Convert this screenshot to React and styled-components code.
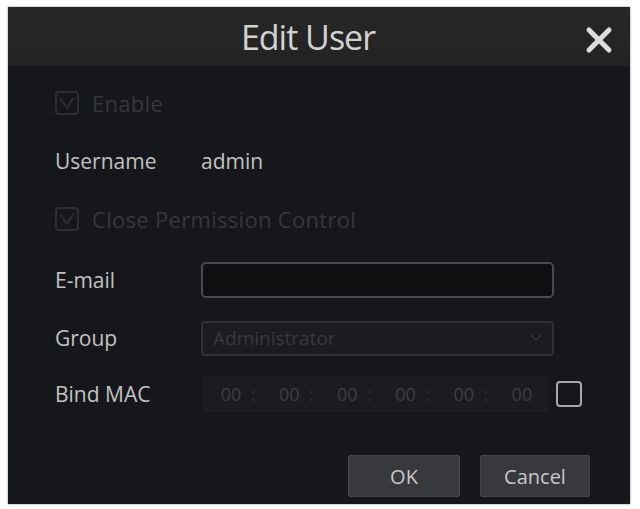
import styled, { createGlobalStyle } from "styled-components";

const GlobalStyle = createGlobalStyle`
  html, body {
    margin: 0;
    padding: 0;
    background: #ffffff;
  }
  body {
    font-family: "Open Sans", "Noto Sans", sans-serif;
  }
`;

const Page = styled.div`
  padding: 7px 10px 5px 8px;
`;

const Dialog = styled.div`
  width: 622px;
  height: 497px;
  display: flex;
  flex-direction: column;
  background: #16171a;
  box-shadow: 0 0 2px rgba(0, 0, 0, 0.5);
`;

const Header = styled.div`
  position: relative;
  height: 59px;
  flex-shrink: 0;
  display: flex;
  align-items: center;
  justify-content: center;
  background: linear-gradient(#272727, #232323);
`;

const Title = styled.h1`
  margin: 0 22px 0 0;
  font-weight: 400;
  font-size: 34px;
  letter-spacing: -1px;
  color: #d2d2d2;
`;

const CloseButton = styled.button`
  position: absolute;
  right: 17px;
  top: 19px;
  width: 28px;
  height: 28px;
  padding: 0;
  border: none;
  background: transparent;
  cursor: pointer;
`;

const Body = styled.div`
  flex: 1;
  display: flex;
  flex-direction: column;
  padding: 17px 40px 7px 47px;
  gap: 18px;
`;

const Row = styled.div`
  height: 40px;
  display: flex;
  align-items: center;
  margin-top: ${(p) => p.$mt || 0}px;
`;

const Label = styled.span`
  width: 146px;
  flex-shrink: 0;
  font-size: 21px;
  color: #c2c2c2;
`;

const Value = styled.span`
  font-size: 21px;
  color: #c2c2c2;
`;

const CheckLabel = styled.label`
  display: flex;
  align-items: center;
  gap: 13px;
  font-size: 22px;
  letter-spacing: 0.3px;
  color: #36373b;
`;

const Box = styled.span`
  width: ${(p) => (p.$dim ? 24 : 26)}px;
  height: ${(p) => (p.$dim ? 24 : 26)}px;
  flex-shrink: 0;
  box-sizing: border-box;
  border: 2px solid ${(p) => (p.$dim ? "#2d2e32" : "#a8a8a8")};
  border-radius: 4px;
  display: flex;
  align-items: center;
  justify-content: center;
`;

const TextInput = styled.div`
  width: 353px;
  height: 36px;
  box-sizing: border-box;
  border: 2px solid #4a4b4f;
  border-radius: 5px;
  background: #0e0f11;
`;

const Select = styled.div`
  width: 353px;
  height: 35px;
  box-sizing: border-box;
  border: 2px solid #2e3034;
  border-radius: 4px;
  background: #1b1c1f;
  display: flex;
  align-items: center;
  justify-content: space-between;
  padding: 0 10px;
  font-size: 19px;
  color: #38393d;
`;

const MacWrap = styled.div`
  display: flex;
  align-items: center;
  gap: 6px;
  margin-left: 2px;
`;

const MacField = styled.div`
  width: 347px;
  height: 36px;
  box-sizing: border-box;
  background: #1b1c1f;
  display: flex;
  align-items: center;
  justify-content: space-around;
  padding: 0 6px;
  font-size: 18px;
  color: #3e3f43;
`;

const Colon = styled.span`
  color: #2e2f33;
`;

const Footer = styled.div`
  margin-top: auto;
  display: flex;
  justify-content: flex-end;
  gap: 20px;
`;

const Button = styled.button`
  width: ${(p) => p.$w}px;
  height: 42px;
  border: 1px solid #45464a;
  border-radius: 2px;
  background: #38393c;
  color: #c8c8c8;
  font-family: "Open Sans", "Noto Sans", sans-serif;
  font-size: 20px;
  cursor: pointer;
`;

function Check({ dim }) {
  return (
    <Box $dim={dim}>
      {dim && (
        <svg width="16" height="14" viewBox="0 0 16 14">
          <path d="M1.5 3 L8 12 L14.5 1.5" fill="none" stroke="#2d2e32" strokeWidth="2" />
        </svg>
      )}
    </Box>
  );
}

export default function App() {
  const mac = ["00", "00", "00", "00", "00", "00"];
  return (
    <>
      <GlobalStyle />
      <Page>
        <Dialog>
          <Header>
            <Title>Edit User</Title>
            <CloseButton aria-label="close">
              <svg width="28" height="28" viewBox="0 0 28 28">
                <path d="M4 4 L24 24 M24 4 L4 24" stroke="#dcdcdc" strokeWidth="5" strokeLinecap="round" />
              </svg>
            </CloseButton>
          </Header>
          <Body>
            <Row>
              <CheckLabel>
                <Check dim />
                Enable
              </CheckLabel>
            </Row>
            <Row>
              <Label>Username</Label>
              <Value>admin</Value>
            </Row>
            <Row>
              <CheckLabel>
                <Check dim />
                Close Permission Control
              </CheckLabel>
            </Row>
            <Row $mt={3}>
              <Label>E-mail</Label>
              <TextInput />
            </Row>
            <Row>
              <Label>Group</Label>
              <Select>
                Administrator
                <svg width="12" height="8" viewBox="0 0 12 8">
                  <path d="M1 1 L6 6 L11 1" fill="none" stroke="#34353a" strokeWidth="1.5" />
                </svg>
              </Select>
            </Row>
            <Row $mt={-2}>
              <Label>Bind MAC</Label>
              <MacWrap>
                <MacField>
                  {mac.map((m, i) => (
                    <span key={i}>
                      {m}
                      {i < mac.length - 1 && <Colon>&nbsp;&nbsp;:</Colon>}
                    </span>
                  ))}
                </MacField>
                <Check />
              </MacWrap>
            </Row>
            <Footer>
              <Button $w={112}>OK</Button>
              <Button $w={110}>Cancel</Button>
            </Footer>
          </Body>
        </Dialog>
      </Page>
    </>
  );
}
